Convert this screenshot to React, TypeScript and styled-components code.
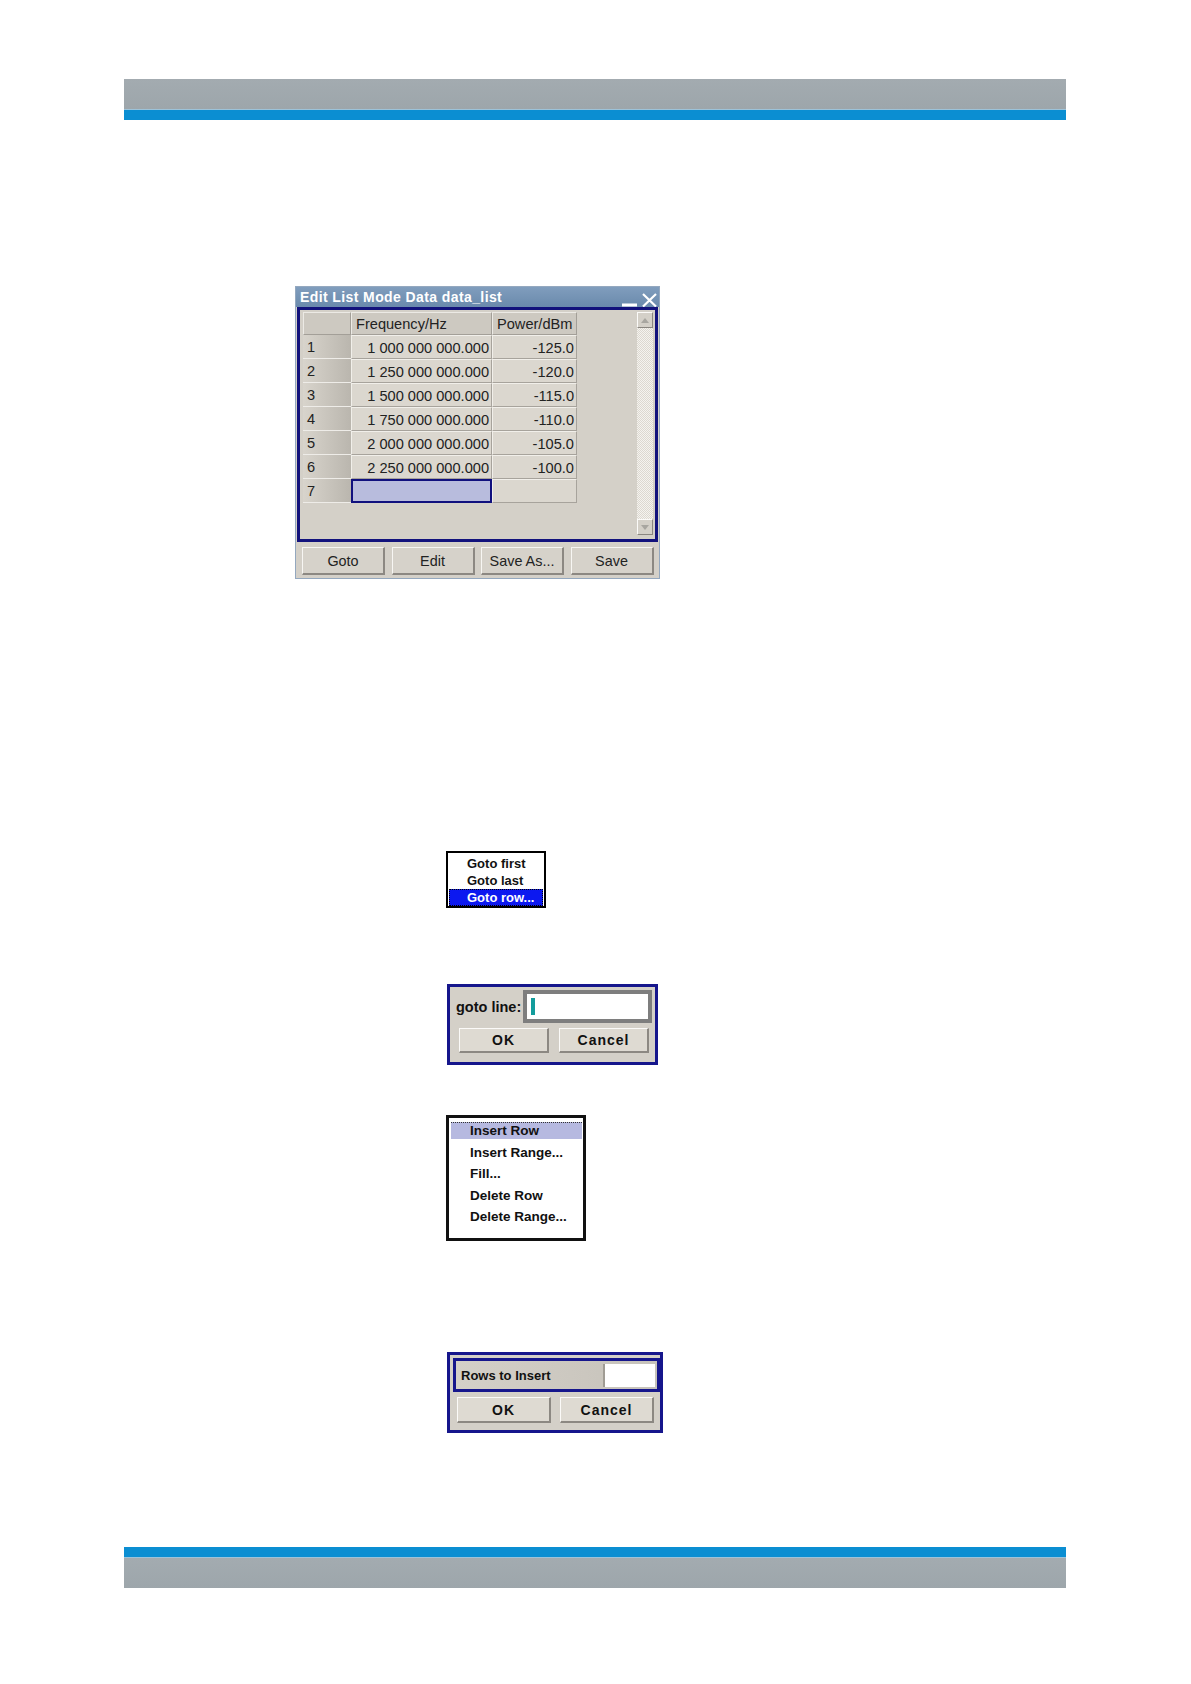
import styled, { createGlobalStyle } from 'styled-components';

const GlobalStyle = createGlobalStyle`
  *, *::before, *::after {
    box-sizing: border-box;
  }
  html, body {
    margin: 0;
    padding: 0;
    background: #fff;
  }
  body {
    font-family: "Liberation Sans", Arial, sans-serif;
    color: #111;
  }
`;

const Page = styled.div`
  width: 1191px;
  min-height: 1684px;
  display: flex;
  flex-direction: column;
  align-items: flex-start;
`;

/* header / footer bands */

const Band = styled.div<{ $top: number; $bottom?: boolean }>`
  margin: ${(p) => p.$top}px 0 0 124px;
  width: 942px;
  display: flex;
  flex-direction: ${(p) => (p.$bottom ? 'column-reverse' : 'column')};
`;

const BandGrey = styled.div`
  height: 30px;
  background: linear-gradient(#a3abb0, #9da6ab);
`;

const BandSeam = styled.div`
  height: 1px;
  background: #9cc3da;
`;

const BandBlue = styled.div`
  height: 10px;
  background: #0b8ed2;
`;

/* list editor window */

const Window = styled.div`
  margin: 166px 0 0 295px;
  width: 365px;
  height: 293px;
  border: 1px solid #94a8bf;
  background: #d4d0c8;
  display: flex;
  flex-direction: column;
`;

const TitleBar = styled.div`
  flex: none;
  height: 20px;
  padding-left: 4px;
  background: linear-gradient(#809dbd, #6a8aac);
  color: #fff;
  font-weight: bold;
  font-size: 14px;
  letter-spacing: 0.4px;
  display: flex;
  align-items: center;
  justify-content: space-between;
`;

const TitleControls = styled.div`
  align-self: stretch;
  display: flex;
  gap: 3px;
  padding-right: 1px;
`;

const TableFrame = styled.div`
  flex: none;
  height: 235px;
  margin: 0 1px;
  border: 3px solid #12127c;
  padding: 2px 2px 4px 3px;
  display: flex;
  justify-content: space-between;
`;

const Grid = styled.div`
  align-self: flex-start;
  display: grid;
  grid-template-columns: 48px 141px 85px;
  grid-template-rows: 23px repeat(7, 24px);
  font-size: 14.6px;
  color: #222;
`;

const HeadCell = styled.div`
  display: flex;
  align-items: center;
  padding: 1px 0 0 4px;
  background: #cdc9c1;
  border-style: solid;
  border-width: 1px;
  border-color: #eceae5 #a39f98 #a39f98 #eceae5;
`;

const RowHead = styled.div`
  display: flex;
  align-items: center;
  padding: 1px 0 0 4px;
  background: linear-gradient(90deg, #d8d4cc, #bab6ae);
  border-bottom: 1px solid #eeece8;
`;

const Cell = styled.div<{ $selected?: boolean }>`
  display: flex;
  align-items: center;
  justify-content: flex-end;
  padding: 1px 2px 0 0;
  background: ${(p) => (p.$selected ? '#b8bcdd' : '#dbd7cf')};
  border-style: solid;
  border-width: ${(p) => (p.$selected ? '2px' : '1px')};
  border-color: ${(p) =>
    p.$selected ? '#10107e' : '#f1efea #a7a39c #a7a39c #f1efea'};
`;

const Scrollbar = styled.div`
  width: 16px;
  display: flex;
  flex-direction: column;
  justify-content: space-between;
  background-color: #f5f3ef;
  background-image: repeating-conic-gradient(#dcd8d0 0 25%, transparent 0 50%);
  background-size: 2px 2px;
`;

const ScrollArrow = styled.div`
  width: 16px;
  height: 16px;
  background: #d4d0c8;
  border-style: solid;
  border-width: 1px;
  border-color: #fbfaf8 #8a8680 #8a8680 #fbfaf8;
  display: flex;
  align-items: center;
  justify-content: center;
`;

const ButtonRow = styled.div`
  display: flex;
  gap: 6.5px;
  padding: 5px 0 0 6px;
`;

const WinButton = styled.button`
  width: 83px;
  height: 28px;
  padding: 0;
  font-family: "Liberation Sans", Arial, sans-serif;
  font-size: 14.4px;
  color: #222;
  background: #d6d2ca;
  border-style: solid;
  border-width: 1px 2px 2px 1px;
  border-color: #f7f6f3 #8c8882 #8c8882 #f7f6f3;
`;

/* goto popup menu */

const GotoMenu = styled.div`
  margin: 272px 0 0 446px;
  width: 100px;
  height: 57px;
  border: 2px solid #000;
  background: #fff;
  padding: 2px 1px 0;
  display: flex;
  flex-direction: column;
`;

const GotoItem = styled.div<{ $active?: boolean }>`
  height: 17px;
  line-height: 15px;
  padding-left: 17px;
  font-weight: bold;
  font-size: 13px;
  color: ${(p) => (p.$active ? '#fff' : '#111')};
  background: ${(p) => (p.$active ? '#0c18f0' : 'transparent')};
  border: 1px dotted ${(p) => (p.$active ? '#000' : 'transparent')};
`;

/* dialogs */

const GotoDialog = styled.div`
  margin: 76px 0 0 447px;
  width: 211px;
  height: 81px;
  border: 3px solid #16168c;
  background: #d4d0c8;
  padding: 3px 3px 0 6px;
  display: flex;
  flex-direction: column;
  gap: 5px;
`;

const LineRow = styled.div`
  height: 33px;
  display: flex;
  align-items: center;
  justify-content: space-between;
`;

const LineLabel = styled.span`
  font-weight: bold;
  font-size: 14.5px;
  color: #111;
`;

const LineInput = styled.div`
  width: 129px;
  height: 33px;
  border: 4px solid #7e7e7e;
  background: #fff;
  padding: 4px 0 0 4px;
`;

const Caret = styled.div`
  width: 4px;
  height: 17px;
  background: #139c9c;
`;

const DialogButtons = styled.div<{ $gap: number; $indent: number }>`
  display: flex;
  gap: ${(p) => p.$gap}px;
  padding-left: ${(p) => p.$indent}px;
`;

const DialogButton = styled.button<{ $w: number; $h: number }>`
  width: ${(p) => p.$w}px;
  height: ${(p) => p.$h}px;
  padding: 0;
  font-family: "Liberation Sans", Arial, sans-serif;
  font-weight: bold;
  font-size: 14px;
  letter-spacing: 1px;
  color: #111;
  background: #dedad2;
  border-style: solid;
  border-width: 1px 2px 2px 1px;
  border-color: #fbfaf8 #8c8882 #8c8882 #fbfaf8;
`;

/* insert context menu */

const ContextMenu = styled.div`
  margin: 50px 0 0 446px;
  width: 140px;
  height: 126px;
  border: 3px solid #111;
  background: #fff;
  padding: 4px 1px 0 2px;
  display: flex;
  flex-direction: column;
  gap: 4.5px;
`;

const MenuItem = styled.div<{ $active?: boolean }>`
  height: 17px;
  line-height: 16px;
  padding-left: 19px;
  font-weight: bold;
  font-size: 13.5px;
  color: #111;
  background: ${(p) => (p.$active ? '#b6b9e0' : 'transparent')};
  border-top: 1px dotted ${(p) => (p.$active ? '#333' : 'transparent')};
`;

const InsertDialog = styled.div`
  margin: 111px 0 0 447px;
  width: 216px;
  height: 81px;
  border: 3px solid #16168c;
  background: #d4d0c8;
  padding: 3px 0 0 3px;
  display: flex;
  flex-direction: column;
  gap: 5px;
`;

const FieldBox = styled.div`
  width: 207px;
  height: 34px;
  border: 3px solid #16168c;
  padding: 0 2px 0 5px;
  background: linear-gradient(90deg, #d4d0c8, #c6c2ba);
  display: flex;
  align-items: center;
  justify-content: space-between;
`;

const FieldLabel = styled.span`
  font-weight: bold;
  font-size: 13px;
  color: #111;
`;

const FieldInput = styled.div`
  width: 52px;
  height: 23px;
  background: #fff;
  border-left: 2px solid #a09c94;
`;

const rows = [
  ['1 000 000 000.000', '-125.0'],
  ['1 250 000 000.000', '-120.0'],
  ['1 500 000 000.000', '-115.0'],
  ['1 750 000 000.000', '-110.0'],
  ['2 000 000 000.000', '-105.0'],
  ['2 250 000 000.000', '-100.0'],
];

function Arrow({ down }: { down?: boolean }) {
  return (
    <svg width="8" height="5" viewBox="0 0 8 5">
      <path d={down ? 'M0 0h8L4 5z' : 'M0 5h8L4 0z'} fill="#a8a6a0" />
    </svg>
  );
}

export default function App() {
  return (
    <>
      <GlobalStyle />
      <Page>
        <Band $top={79}>
          <BandGrey />
          <BandSeam />
          <BandBlue />
        </Band>

        <Window>
          <TitleBar>
            <span>Edit List Mode Data data_list</span>
            <TitleControls>
              <svg width="16" height="20" viewBox="0 0 16 20">
                <rect x="0" y="16.5" width="15" height="3" fill="#fff" />
              </svg>
              <svg width="17" height="20" viewBox="0 0 17 20">
                <path d="M2 7L15 19.5M15 7L2 19.5" stroke="#fff" strokeWidth="2.2" />
              </svg>
            </TitleControls>
          </TitleBar>

          <TableFrame>
            <Grid>
              <HeadCell />
              <HeadCell>Frequency/Hz</HeadCell>
              <HeadCell>Power/dBm</HeadCell>
              {rows.map(([freq, power], i) => (
                <>
                  <RowHead key={`h${i}`}>{i + 1}</RowHead>
                  <Cell key={`f${i}`}>{freq}</Cell>
                  <Cell key={`p${i}`}>{power}</Cell>
                </>
              ))}
              <RowHead>7</RowHead>
              <Cell $selected />
              <Cell />
            </Grid>
            <Scrollbar>
              <ScrollArrow>
                <Arrow />
              </ScrollArrow>
              <ScrollArrow>
                <Arrow down />
              </ScrollArrow>
            </Scrollbar>
          </TableFrame>

          <ButtonRow>
            <WinButton>Goto</WinButton>
            <WinButton>Edit</WinButton>
            <WinButton>Save As...</WinButton>
            <WinButton>Save</WinButton>
          </ButtonRow>
        </Window>

        <GotoMenu>
          <GotoItem>Goto first</GotoItem>
          <GotoItem>Goto last</GotoItem>
          <GotoItem $active>Goto row...</GotoItem>
        </GotoMenu>

        <GotoDialog>
          <LineRow>
            <LineLabel>goto line:</LineLabel>
            <LineInput>
              <Caret />
            </LineInput>
          </LineRow>
          <DialogButtons $gap={10} $indent={3}>
            <DialogButton $w={90} $h={25}>OK</DialogButton>
            <DialogButton $w={90} $h={25}>Cancel</DialogButton>
          </DialogButtons>
        </GotoDialog>

        <ContextMenu>
          <MenuItem $active>Insert Row</MenuItem>
          <MenuItem>Insert Range...</MenuItem>
          <MenuItem>Fill...</MenuItem>
          <MenuItem>Delete Row</MenuItem>
          <MenuItem>Delete Range...</MenuItem>
        </ContextMenu>

        <InsertDialog>
          <FieldBox>
            <FieldLabel>Rows to Insert</FieldLabel>
            <FieldInput />
          </FieldBox>
          <DialogButtons $gap={9} $indent={4}>
            <DialogButton $w={94} $h={26}>OK</DialogButton>
            <DialogButton $w={94} $h={26}>Cancel</DialogButton>
          </DialogButtons>
        </InsertDialog>

        <Band $top={114} $bottom>
          <BandGrey />
          <BandSeam />
          <BandBlue />
        </Band>
      </Page>
    </>
  );
}
